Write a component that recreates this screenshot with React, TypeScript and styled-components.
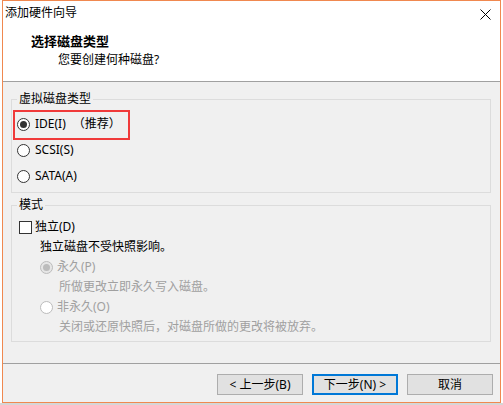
import styled, { createGlobalStyle } from 'styled-components';

const GlobalStyle = createGlobalStyle`
  html, body {
    margin: 0;
    padding: 0;
    background: #ffffff;
  }
  body {
    font-family: "Noto Sans", "Noto Sans CJK SC", sans-serif;
    font-size: 12px;
    color: #000000;
  }
`;

const CloseIcon = () => (
  <svg width="11" height="11" viewBox="0 0 11 11">
    <path d="M0.5 0.5 L10.5 10.5 M10.5 0.5 L0.5 10.5" stroke="#000" strokeWidth="1" />
  </svg>
);

const App = () => {
  return (
    <>
      <GlobalStyle />
      <Window>
        <Top>
          <TitleBar>
            <WindowTitle>添加硬件向导</WindowTitle>
            <CloseButton>
              <CloseIcon />
            </CloseButton>
          </TitleBar>
          <Header>
            <HeaderTitle>选择磁盘类型</HeaderTitle>
            <HeaderSub>您要创建何种磁盘?</HeaderSub>
          </Header>
        </Top>
        <Separator />
        <Body>
          <Group $top={10} $pt={5} $pb={3}>
            <GroupTitle>虚拟磁盘类型</GroupTitle>
            <Row $h={26}>
              <Highlight />
              <Radio $checked />
              <Label>IDE(I)</Label>
              <Label $gap={7}>（推荐）</Label>
            </Row>
            <Row $h={26}>
              <Radio />
              <Label>SCSI(S)</Label>
            </Row>
            <Row $h={26}>
              <Radio />
              <Label>SATA(A)</Label>
            </Row>
          </Group>
          <Group $top={5} $pt={5} $pb={4}>
            <GroupTitle>模式</GroupTitle>
            <Row $h={20} $indent={2}>
              <CheckBox />
              <Label $gap={3}>独立(D)</Label>
            </Row>
            <Row $h={20} $indent={23}>
              <Label $gap={0}>独立磁盘不受快照影响。</Label>
            </Row>
            <Row $h={20} $indent={23}>
              <Radio $checked $disabled />
              <Label $disabled $gap={4}>永久(P)</Label>
            </Row>
            <Row $h={20} $indent={42}>
              <Label $disabled $gap={0}>所做更改立即永久写入磁盘。</Label>
            </Row>
            <Row $h={20} $indent={23}>
              <Radio $disabled />
              <Label $disabled $gap={4}>非永久(O)</Label>
            </Row>
            <Row $h={20} $indent={42}>
              <Label $disabled $gap={0}>关闭或还原快照后，对磁盘所做的更改将被放弃。</Label>
            </Row>
          </Group>
        </Body>
        <Separator />
        <Footer>
          <Button>&lt; 上一步(B)</Button>
          <Button $default>下一步(N) &gt;</Button>
          <Button>取消</Button>
        </Footer>
      </Window>
      <Backdrop />
    </>
  );
};

const Window = styled.div`
  margin-left: 2px;
  width: 499px;
  height: 403px;
  box-sizing: border-box;
  border: 1px solid #f0884f;
  background: #f0f0f0;
  display: flex;
  flex-direction: column;
`;

const Backdrop = styled.div`
  height: 2px;
  background: #d6d6d6;
`;

const Top = styled.div`
  background: #ffffff;
  height: 80px;
  display: flex;
  flex-direction: column;
`;

const TitleBar = styled.div`
  height: 24px;
  display: flex;
  align-items: center;
  justify-content: space-between;
  padding: 0 9px 0 2px;
`;

const WindowTitle = styled.span`
  line-height: 16px;
  font-size: 12px;
`;

const CloseButton = styled.span`
  display: flex;
  width: 11px;
  height: 11px;
  margin-top: 3px;
`;

const Header = styled.div`
  display: flex;
  flex-direction: column;
  padding: 8px 0 0 28px;
`;

const HeaderTitle = styled.span`
  font-size: 13px;
  font-weight: 700;
  line-height: 16px;
`;

const HeaderSub = styled.span`
  margin: 3px 0 0 27px;
  line-height: 16px;
`;

const Separator = styled.div`
  height: 1px;
  background: #a0a0a0;
`;

const Body = styled.div`
  flex: 1;
  display: flex;
  flex-direction: column;
  padding: 0 9px 0 8px;
`;

const Group = styled.fieldset<{ $top: number; $pt: number; $pb: number }>`
  margin: ${(p) => p.$top}px 0 0 0;
  padding: ${(p) => p.$pt}px 5px ${(p) => p.$pb}px 5px;
  border: 1px solid #dcdcdc;
  min-width: 0;
`;

const GroupTitle = styled.legend`
  padding: 0 2px;
  margin: 0;
  line-height: 14px;
  font-size: 12px;
`;

const Row = styled.div<{ $h: number; $indent?: number }>`
  position: relative;
  height: ${(p) => p.$h}px;
  display: flex;
  align-items: center;
  padding-left: ${(p) => p.$indent ?? 0}px;
`;

const Highlight = styled.div`
  position: absolute;
  left: -4px;
  top: -1px;
  width: 117px;
  height: 30px;
  box-sizing: border-box;
  border: 2px solid #f03a3a;
  pointer-events: none;
`;

const Radio = styled.span<{ $checked?: boolean; $disabled?: boolean }>`
  width: 13px;
  height: 13px;
  box-sizing: border-box;
  border-radius: 50%;
  border: 1px solid ${(p) => (p.$disabled ? '#bcbcbc' : '#333333')};
  background: ${(p) => (p.$disabled && p.$checked ? '#e6e6e6' : '#ffffff')};
  display: flex;
  align-items: center;
  justify-content: center;
  flex-shrink: 0;
  &::after {
    content: '';
    display: ${(p) => (p.$checked ? 'block' : 'none')};
    width: 7px;
    height: 7px;
    border-radius: 50%;
    background: ${(p) => (p.$disabled ? '#bcbcbc' : '#333333')};
  }
`;

const CheckBox = styled.span`
  width: 13px;
  height: 13px;
  box-sizing: border-box;
  border: 1px solid #333333;
  background: #ffffff;
  flex-shrink: 0;
`;

const Label = styled.span<{ $gap?: number; $disabled?: boolean }>`
  margin-left: ${(p) => p.$gap ?? 5}px;
  line-height: 16px;
  white-space: nowrap;
  color: ${(p) => (p.$disabled ? '#a0a0a0' : '#000000')};
`;

const Footer = styled.div`
  height: 38px;
  display: flex;
  justify-content: flex-end;
  align-items: flex-start;
  gap: 9px;
  padding: 10px 7px 0 0;
  box-sizing: border-box;
`;

const Button = styled.button<{ $default?: boolean }>`
  width: 86px;
  height: 21px;
  box-sizing: border-box;
  padding: 0;
  font-family: inherit;
  font-size: 12px;
  line-height: 16px;
  color: #000000;
  background: #e1e1e1;
  border: 1px solid ${(p) => (p.$default ? '#0078d7' : '#adadad')};
  box-shadow: ${(p) => (p.$default ? 'inset 0 0 0 1px #0078d7' : 'none')};
  border-radius: 0;
`;

export default App;
